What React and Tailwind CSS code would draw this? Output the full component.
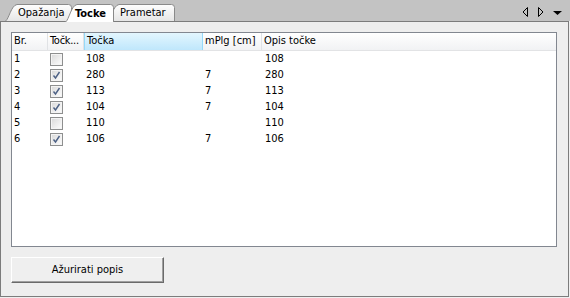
import React from "react";

function Tab({ label, active, width, className, textClass }) {
  const H = active ? 18 : 17;
  const W = width;
  const d = `M0.5 ${H} C 4 ${H - 2} 6 1.5 12 0.5 L ${W - 3.5} 0.5 Q ${W - 0.5} 0.5 ${W - 0.5} 3.5 L ${W - 0.5} ${H}`;
  const id = "g" + label.replace(/[^a-z]/gi, "");
  return (
    <div className={"relative flex items-center " + className} style={{ width: W, height: H }}>
      <svg className="absolute inset-0" width={W} height={H} viewBox={`0 0 ${W} ${H}`}>
        <defs>
          <linearGradient id={id} x1="0" y1="0" x2="0" y2="1">
            <stop offset="0" stopColor={active ? "#ffffff" : "#fefefe"} />
            <stop offset="1" stopColor={active ? "#ffffff" : "#e6e6e6"} />
          </linearGradient>
        </defs>
        <path d={d + " Z"} fill={`url(#${id})`} stroke="none" />
        <path d={d} fill="none" stroke="#8a8a8a" strokeWidth="1" />
      </svg>
      <span className={"relative leading-none " + textClass}>{label}</span>
    </div>
  );
}

function Check({ on }) {
  return (
    <svg width="13" height="13" viewBox="0 0 13 13">
      <defs>
        <linearGradient id="cb" x1="0" y1="0" x2="1" y2="1">
          <stop offset="0" stopColor="#dcdcdc" />
          <stop offset="1" stopColor="#fbfbfb" />
        </linearGradient>
      </defs>
      <rect x="0.5" y="0.5" width="12" height="12" fill="#f4f4f4" stroke="#8e8f8f" />
      <rect x="2" y="2" width="9" height="9" fill="url(#cb)" />
      {on && (
        <path d="M3.5 6.5 L5.5 9 L9.5 3" fill="none" stroke="#4d6185" strokeWidth="1.4" />
      )}
    </svg>
  );
}

const rows = [
  ["1", false, "108", "", "108"],
  ["2", true, "280", "7", "280"],
  ["3", true, "113", "7", "113"],
  ["4", true, "104", "7", "104"],
  ["5", false, "110", "", "110"],
  ["6", true, "106", "7", "106"],
];

export default function App() {
  return (
    <div className="w-[570px] h-[298px] bg-[#efefef] text-[11px] text-black font-['DejaVu_Sans_Condensed','Liberation_Sans',sans-serif]">
      <div className="relative h-[21px] bg-[#c3c3c3] flex items-end pl-[5px]">
        <Tab label="Opažanja" width={67} className="z-0" textClass="pl-[13px]" />
        <Tab label="Tocke" active width={49} className="z-20 ml-[-7px] mb-[-1px] self-end" textClass="pl-[10px] font-bold" />
        <Tab label="Prametar" width={68} className="z-10 ml-[-7px]" textClass="pl-[13px]" />
        <div className="absolute right-[8px] top-[7px] flex items-center gap-[8px]">
          <svg width="7" height="10" viewBox="0 0 7 10">
            <path d="M5.5 0.5 L1 5 L5.5 9.5 Z" fill="none" stroke="#000" strokeWidth="1" />
          </svg>
          <svg width="7" height="10" viewBox="0 0 7 10">
            <path d="M1.5 0.5 L6 5 L1.5 9.5 Z" fill="none" stroke="#000" strokeWidth="1" />
          </svg>
          <svg width="9" height="10" viewBox="0 0 9 10" className="ml-[1px]">
            <path d="M0 4 L9 4 L4.5 8 Z" fill="#000" />
          </svg>
        </div>
      </div>
      <div className="relative z-10 w-[569px] h-[276px] border border-[#7c7c7c] bg-[#eeeeee] pl-[10px] pt-[10px]">
        <div className="w-[546px] h-[215px] border border-[#828790] bg-white flex flex-col">
          <div className="flex h-[18px] border-b border-[#e2e3e5] bg-gradient-to-b from-white to-[#f1f2f4]">
            <div className="w-[36px] pl-[2px] flex items-center border-r border-[#e0e2e5]">Br.</div>
            <div className="w-[36px] pl-[2px] flex items-center border-r border-[#e0e2e5] whitespace-nowrap tracking-[-0.3px]">Točk...</div>
            <div className="w-[119px] pl-[2px] flex items-center border-x border-[#96d9f9] bg-gradient-to-b from-[#e3f6fe] to-[#bfe7fc]">Točka</div>
            <div className="w-[59px] pl-[2px] flex items-center border-r border-[#e0e2e5]">mPlg [cm]</div>
            <div className="flex-1 pl-[2px] flex items-center">Opis točke</div>
          </div>
          {rows.map((r) => (
            <div key={r[0]} className="flex h-[16px] items-center">
              <div className="w-[36px] pl-[2px]">{r[0]}</div>
              <div className="w-[36px] pl-[2px] flex items-center">
                <Check on={r[1]} />
              </div>
              <div className="w-[119px] pl-[2px]">{r[2]}</div>
              <div className="w-[59px] pl-[2px]">{r[3]}</div>
              <div className="flex-1 pl-[3px]">{r[4]}</div>
            </div>
          ))}
        </div>
        <button className="mt-[10px] w-[153px] h-[26px] bg-[#efefef] border border-t-white border-l-white border-r-[#6a6a6a] border-b-[#6a6a6a] shadow-[inset_-1px_-1px_0_#a0a0a0] flex items-center justify-center text-[11px]">
          Ažurirati popis
        </button>
      </div>
    </div>
  );
}
